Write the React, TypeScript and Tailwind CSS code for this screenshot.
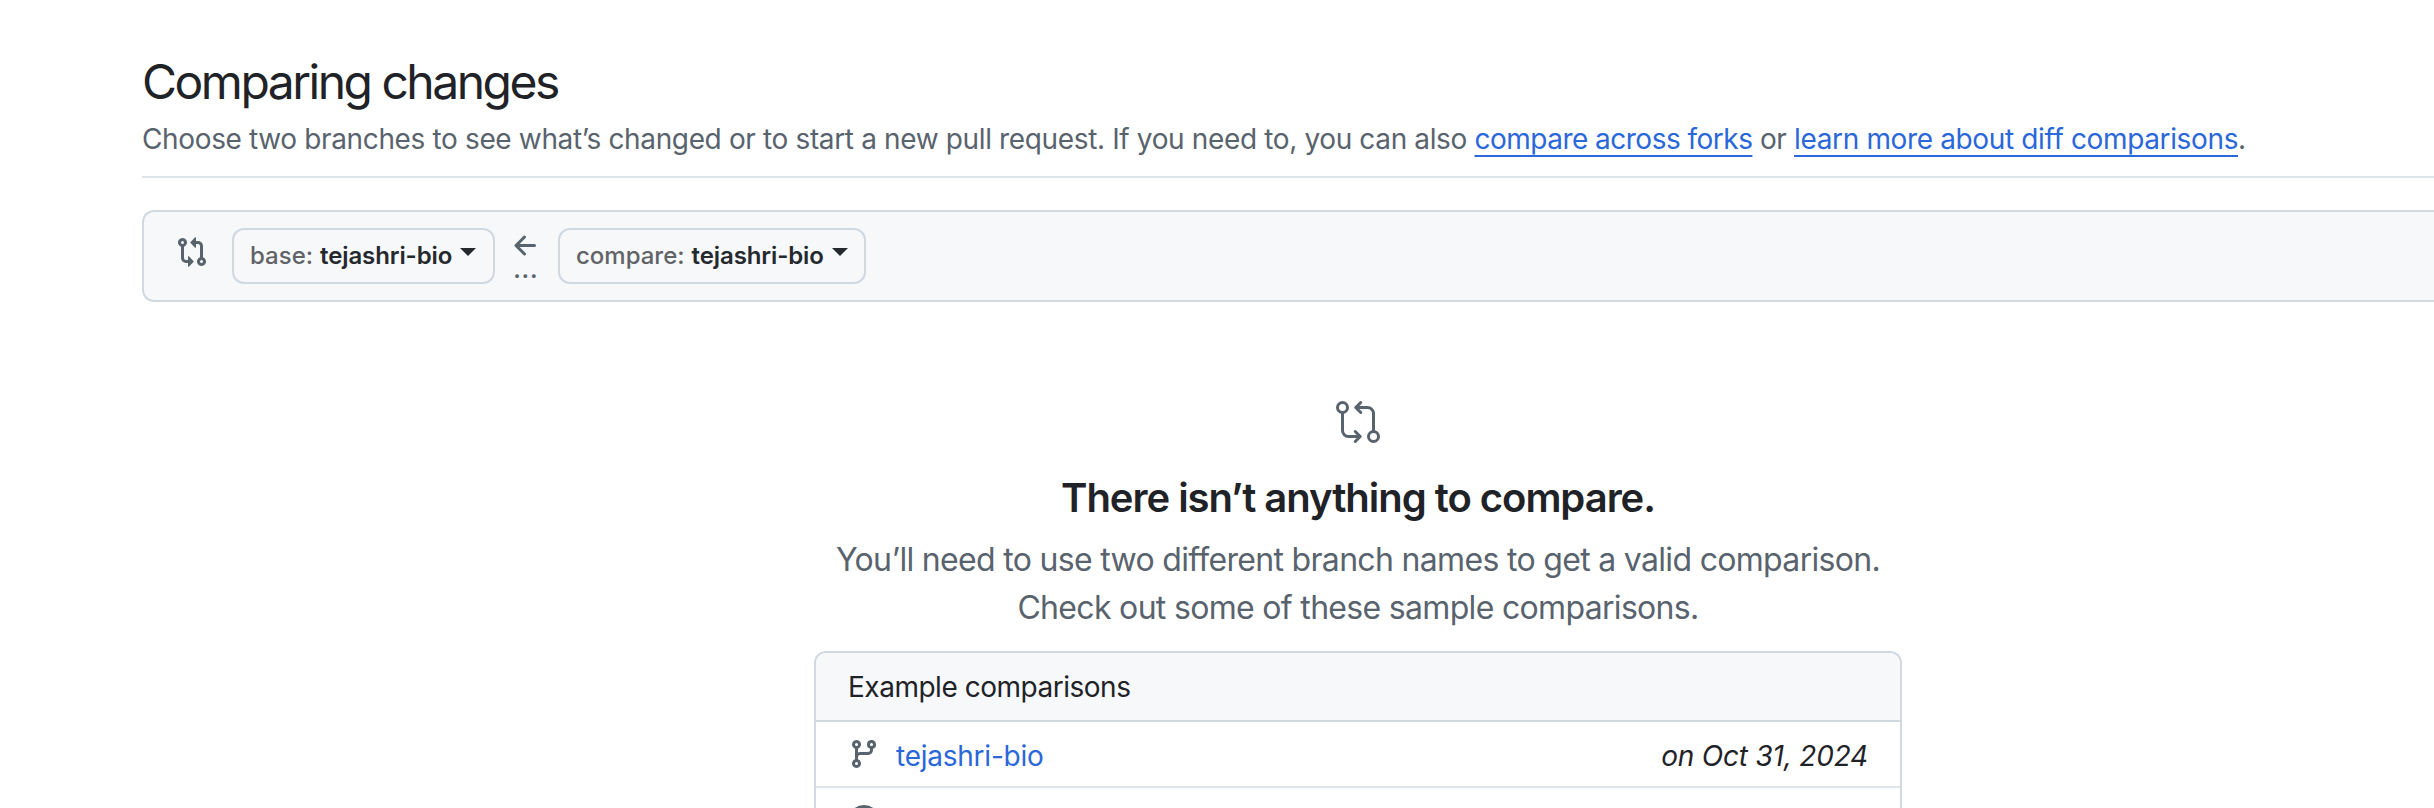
import { GoGitCompare } from "react-icons/go";

const paths = {
  compare:
    "M9.573.677A.25.25 0 0 1 10 .854V2.5h1A2.5 2.5 0 0 1 13.5 5v5.628a2.251 2.251 0 1 1-1.5 0V5a1 1 0 0 0-1-1h-1v1.646a.25.25 0 0 1-.427.177L7.177 3.427a.25.25 0 0 1 0-.354ZM6 12v-1.646a.25.25 0 0 1 .427-.177l2.396 2.396a.25.25 0 0 1 0 .354l-2.396 2.396A.25.25 0 0 1 6 15.146V13.5H5A2.5 2.5 0 0 1 2.5 11V5.372a2.25 2.25 0 1 1 1.5 0V11a1 1 0 0 0 1 1ZM4 3.25a.75.75 0 1 0-1.5 0 .75.75 0 0 0 1.5 0ZM12.75 12a.75.75 0 1 0 0 1.5.75.75 0 0 0 0-1.5Z",
  branch:
    "M9.5 3.25a2.25 2.25 0 1 1 3 2.122V6A2.5 2.5 0 0 1 10 8.5H6a1 1 0 0 0-1 1v1.128a2.251 2.251 0 1 1-1.5 0V5.372a2.25 2.25 0 1 1 1.5 0v1.836A2.493 2.493 0 0 1 6 7h4a1 1 0 0 0 1-1v-.628A2.25 2.25 0 0 1 9.5 3.25Zm-6 0a.75.75 0 1 0 1.5 0 .75.75 0 0 0-1.5 0Zm8.25-.75a.75.75 0 1 0 0 1.5.75.75 0 0 0 0-1.5ZM4.25 12a.75.75 0 1 0 0 1.5.75.75 0 0 0 0-1.5Z",
  arrowLeft:
    "M7.78 12.53a.75.75 0 0 1-1.06 0L2.47 8.28a.75.75 0 0 1 0-1.06l4.25-4.25a.751.751 0 0 1 1.042.018.751.751 0 0 1 .018 1.042L4.81 7h7.44a.75.75 0 0 1 0 1.5H4.81l2.97 2.97a.75.75 0 0 1 0 1.06Z",
  clock:
    "M8 0a8 8 0 1 1 0 16A8 8 0 0 1 8 0ZM1.5 8a6.5 6.5 0 1 0 13 0 6.5 6.5 0 0 0-13 0Zm7-3.25v2.992l2.028.812a.75.75 0 0 1-.557 1.392l-2.5-1A.751.751 0 0 1 7 8.25v-3.5a.75.75 0 0 1 1.5 0Z",
};

function Octicon({ name, className = "" }: { name: keyof typeof paths; className?: string }) {
  return (
    <svg viewBox="0 0 16 16" className={`size-8 shrink-0 fill-[#59636e] ${className}`} aria-hidden="true">
      <path d={paths[name]} />
    </svg>
  );
}

function BranchButton({ label, branch, className }: { label: string; branch: string; className: string }) {
  return (
    <button
      className={`flex h-14 shrink-0 items-center rounded-xl border-2 border-[#d1d9e0] bg-[#f6f8fa] pl-4 text-2xl whitespace-pre ${className}`}
    >
      <span className="font-medium text-[#616367]">{label}</span>
      <span className="ml-[7px] font-semibold tracking-[-0.1px] text-[#25292e]">{branch}</span>
      <svg viewBox="0 0 16 8" className="mb-2 ml-2 h-2 w-4 fill-[#25292e]" aria-hidden="true">
        <path d="M0 0h16L8 8Z" />
      </svg>
    </button>
  );
}

export default function App() {
  return (
    <div className="h-[808px] overflow-hidden bg-white pt-[46px] pl-[142px] font-['Inter',sans-serif] text-[#1f2328]">
      <header className="border-b-2 border-[#dfe4e8] pb-4">
        <h1 className="text-5xl leading-[72px] font-normal tracking-[-2.5px]">Comparing changes</h1>
        <p className="text-[28px] leading-[42px] tracking-[-0.36px] whitespace-nowrap text-[#59636e]">
          Choose two branches to see what’s changed or to start a new pull request. If you need to, you can also{" "}
          <a className="tracking-[-0.515px] text-[#2a67d9] underline decoration-2 underline-offset-[6px] [text-decoration-skip-ink:none]">
            compare across forks
          </a>{" "}
          or{" "}
          <a className="text-[#2a67d9] underline decoration-2 underline-offset-[6px] [text-decoration-skip-ink:none]">
            learn more about diff comparisons
          </a>
          .
        </p>
      </header>

      <section className="mt-8 flex h-[92px] items-center rounded-l-xl border-2 border-r-0 border-[#d1d9e0] bg-[#f6f8fa] pl-8">
        <Octicon name="compare" className="mb-2" />
        <BranchButton label="base:" branch="tejashri-bio" className="ml-6 w-[263px]" />
        <div className="flex w-[63px] flex-col items-center pt-1">
          <Octicon name="arrowLeft" className="-ml-px" />
          <span className="-ml-0.5 h-6 text-[28px] leading-[12px] tracking-[0.3px] text-[#59636e]">...</span>
        </div>
        <BranchButton label="compare:" branch="tejashri-bio" className="w-[308px]" />
      </section>

      <section className="mt-24 ml-[672px] flex w-[1088px] flex-col items-center">
        <GoGitCompare size={48} color="#59636e" />
        <h3 className="mt-[22px] text-[40px] leading-[60px] font-semibold tracking-[-1.03px]">
          There isn’t anything to compare.
        </h3>
        <p className="mt-2 text-center text-[32px] leading-[48px] tracking-[-0.68px] whitespace-nowrap text-[#59636e]">
          You’ll need to use two different branch names to get a valid comparison.
          <br />
          Check out some of these sample comparisons.
        </p>

        <div className="mt-[19px] w-full rounded-t-xl border-2 border-b-0 border-[#d1d9e0] text-[28px]">
          <div className="flex h-[69px] items-center rounded-t-[10px] border-b-2 border-[#d1d9e0] bg-[#f6f8fa] pl-8 tracking-[-0.48px]">
            Example comparisons
          </div>
          <div className="flex h-[66px] items-center border-b-2 border-[#dfe4e8] px-8">
            <Octicon name="branch" />
            <a className="mt-1 ml-4 tracking-[-0.24px] text-[#2a67d9]">tejashri-bio</a>
            <em className="mt-1 ml-auto tracking-[-0.2px]">on Oct 31, 2024</em>
          </div>
          <div className="flex h-[66px] items-center px-8">
            <Octicon name="clock" />
          </div>
        </div>
      </section>
    </div>
  );
}
